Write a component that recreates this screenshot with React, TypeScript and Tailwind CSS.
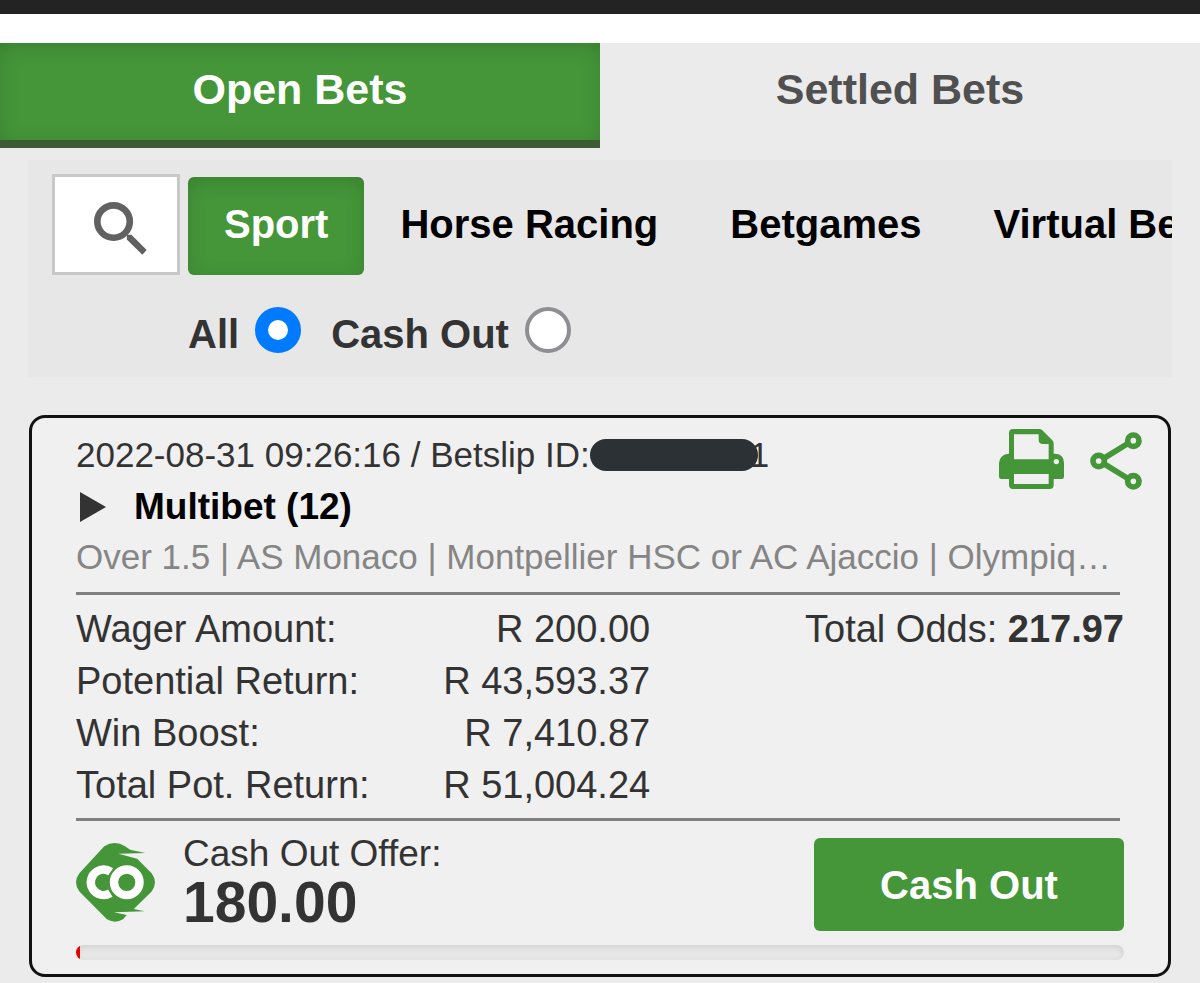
import { useState } from "react";

const categories = ["Sport", "Horse Racing", "Betgames", "Virtual Betting"];

const amounts = [
  { label: "Wager Amount:", value: "R 200.00" },
  { label: "Potential Return:", value: "R 43,593.37" },
  { label: "Win Boost:", value: "R 7,410.87" },
  { label: "Total Pot. Return:", value: "R 51,004.24" },
];

function SearchIcon() {
  return (
    <svg viewBox="0 0 158 160" className="h-[53px] w-[53px]" fill="none" stroke="#616161" aria-hidden="true">
      <circle cx="58" cy="59" r="49" strokeWidth="20" />
      <path d="M98 99L112 99L158 145L145 159L98 113Z" fill="#616161" stroke="none" />
    </svg>
  );
}

function PrintIcon() {
  return (
    <svg viewBox="0 0 195 180" className="h-[60px] w-[65px]" aria-hidden="true">
      <path
        fill="#449639"
        fillRule="evenodd"
        d="M42 0H120Q126 0 130 4L160 34Q164 38 164 44V74H170Q195 76 195 102V143Q195 150 188 150H164V168Q164 180 152 180H42Q30 180 30 168V150H7Q0 150 0 143V102Q2 76 30 74V12Q30 0 42 0ZM45 16V91H149V45H132Q119 45 119 32V16ZM45 135V165H149V135ZM172 90a8 8 0 1 0 .1 0Z"
      />
    </svg>
  );
}

function ShareIcon() {
  return (
    <svg viewBox="0 0 156 174" className="h-[58px] w-[52px]" fill="none" stroke="#449639" strokeWidth="17" aria-hidden="true">
      <path d="M43 78L113 35M43 96L113 139" strokeWidth="17" />
      <circle cx="26" cy="87" r="17" />
      <circle cx="130" cy="26" r="17" />
      <circle cx="130" cy="148" r="17" />
    </svg>
  );
}

function CashOutLogo() {
  return (
    <svg viewBox="0 0 235 235" className="mt-[9px] h-[79px] w-[79px] shrink-0" role="img" aria-label="Cash out">
      <path
        fill="#449639"
        d="M84 10Q115 -10 146 10L161 20L206 30L126 32L182 47L225 90Q245 117 225 144L172 196L204 203L113 206L151 214L140 227Q117 241 92 227L10 144Q-10 117 10 90Z"
      />
      <circle cx="82" cy="117" r="38" fill="none" stroke="#ffffff" strokeWidth="25" strokeDasharray="162 77" transform="rotate(58 82 117)" />
      <circle cx="151" cy="117" r="54" fill="#449639" />
      <circle cx="151" cy="117" r="38" fill="none" stroke="#ffffff" strokeWidth="25" />
    </svg>
  );
}

export default function App() {
  const [tab, setTab] = useState("open");
  const [category, setCategory] = useState("Sport");
  const [filter, setFilter] = useState("all");

  const tabClass = (id: string) =>
    tab === id
      ? "border-[#3b5b34] bg-[#449639] text-white shadow-[inset_0_4px_20px_rgba(0,0,0,0.14)]"
      : "border-transparent text-[#505050]";

  const radioClass =
    "size-[46px] appearance-none rounded-full border-4 border-[#8e8e93] bg-white checked:border-[13px] checked:border-[#007aff]";

  return (
    <div className="min-h-screen bg-[#ebebeb] font-['Liberation_Sans',Arial,sans-serif] text-[#333333]">
      <header className="h-[43px] border-t-14 border-[#232323] bg-white" />

      <nav className="grid grid-cols-2 text-[43px] leading-[48px] font-bold">
        <button className={`border-b-8 pt-[22px] pb-[27px] ${tabClass("open")}`} onClick={() => setTab("open")}>
          Open Bets
        </button>
        <button className={`border-b-8 pt-[22px] pb-[27px] ${tabClass("settled")}`} onClick={() => setTab("settled")}>
          Settled Bets
        </button>
      </nav>

      <main className="px-7 pt-3 pb-1.5">
        <section className="overflow-hidden bg-[#e7e7e7] pt-3.5 pb-[19px] pl-6 text-[40px] leading-[48px] font-bold">
          <div className="flex items-end gap-2">
            <button
              aria-label="Search"
              className="flex h-[101px] w-32 shrink-0 items-center justify-center border-3 border-[#c8c8c8] bg-white pt-2 pl-2"
            >
              <SearchIcon />
            </button>
            <div className="flex">
              {categories.map((name) => (
                <button
                  key={name}
                  onClick={() => setCategory(name)}
                  className={`h-[98px] rounded-md px-9 pb-1 whitespace-nowrap ${
                    category === name
                      ? "bg-[#449639] text-white shadow-[inset_0_4px_20px_rgba(0,0,0,0.14)]"
                      : "text-black"
                  }`}
                >
                  {name}
                </button>
              ))}
            </div>
          </div>
          <div className="mt-8 ml-[136px] flex gap-[30px]">
            <label className="flex items-start gap-4">
              <span className="pt-[3px]">All</span>
              <input type="radio" name="filter" checked={filter === "all"} onChange={() => setFilter("all")} className={radioClass} />
            </label>
            <label className="flex items-start gap-4">
              <span className="pt-[3px]">Cash Out</span>
              <input type="radio" name="filter" checked={filter === "cash"} onChange={() => setFilter("cash")} className={radioClass} />
            </label>
          </div>
        </section>

        <article className="mx-px mt-[38px] rounded-2xl border-3 border-[#111111] bg-[#f0f0f0] px-11 pt-[11px] pb-3.5">
          <div className="flex justify-between">
            <div>
              <p className="flex items-center text-[35px] leading-[52px]">
                2022-08-31 09:26:16 / Betslip ID:
                <span className="h-8 w-[168px] rounded-full bg-[#2b3135]" />
                <span className="-ml-2">1</span>
              </p>
              <button className="flex items-center gap-7 pl-1 text-[37px] leading-[51px] font-bold text-black">
                <svg viewBox="0 0 26 30" className="h-[30px] w-[26px]" fill="#333333" aria-hidden="true">
                  <path d="M0 0L26 15L0 30Z" />
                </svg>
                Multibet (12)
              </button>
            </div>
            <div className="-mr-4.5 flex items-start gap-[26px]">
              <button aria-label="Print">
                <PrintIcon />
              </button>
              <button aria-label="Share" className="pt-[3px]">
                <ShareIcon />
              </button>
            </div>
          </div>
          <p className="truncate text-[35px] leading-[50px] text-[#858585]">
            Over 1.5 | AS Monaco | Montpellier HSC or AC Ajaccio | Olympiq…
          </p>

          <div className="mt-2.5 mr-1 mb-2 flex items-start justify-between border-y-3 border-[#808080] pt-2 pb-[7px] text-[38px] leading-[52px]">
            <table className="w-[55%]">
              <tbody>
                {amounts.map((row) => (
                  <tr key={row.label}>
                    <th scope="row" className="text-left font-normal">{row.label}</th>
                    <td className="text-right">{row.value}</td>
                  </tr>
                ))}
              </tbody>
            </table>
            <p className="-mr-1">
              Total Odds: <strong>217.97</strong>
            </p>
          </div>

          <div className="flex items-start pt-[5px]">
            <CashOutLogo />
            <div className="ml-7 flex-1">
              <p className="text-[37px] leading-[40px]">Cash Out Offer:</p>
              <p className="text-[57px] leading-[56px] font-bold">180.00</p>
            </div>
            <button className="mt-1 h-[93px] w-[310px] rounded-md bg-[#449639] text-[40px] font-bold text-white">Cash Out</button>
          </div>
          <div
            role="progressbar"
            aria-label="Cash out progress"
            aria-valuenow={0}
            className="mt-3.5 h-[15px] overflow-hidden rounded-full bg-[#e7e7e7] shadow-[inset_0_2px_6px_rgba(0,0,0,0.10)]"
          >
            <div className="h-full w-1 bg-[#e80000]" />
          </div>
        </article>
      </main>
    </div>
  );
}
